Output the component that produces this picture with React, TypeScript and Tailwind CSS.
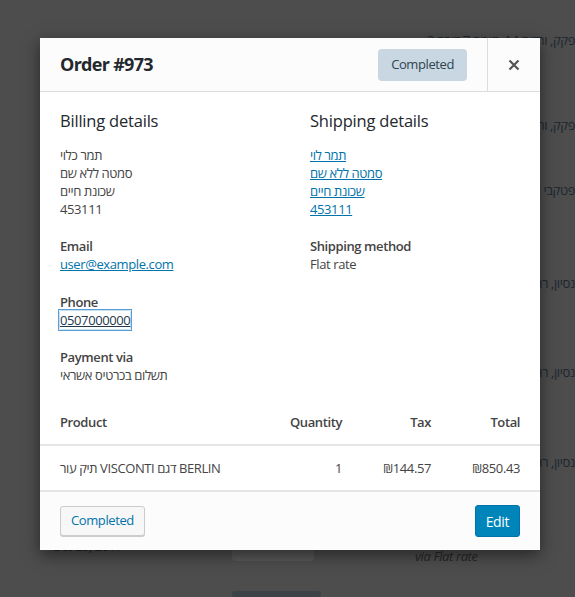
import React from "react";

const fontStack = "font-['Open_Sans','DejaVu_Sans',sans-serif]";

function BackgroundPage() {
  // The orders list beneath the dimmed overlay; only its edges stay visible.
  const rightLines = [
    { text: "פקק, ורדיה 14, קומה 7 דירה 2", mt: "mt-[31px]" },
    { text: "פקק, ורדיה 14, קומה 7 דירה 2", mt: "mt-[67px]" },
    { text: "פטקבי 12, תל אביב", mt: "mt-[47px]" },
    { text: "נסיון, רחוב הבדיקה 3", mt: "mt-[75px]" },
    { text: "נסיון, רחוב הבדיקה 3", mt: "mt-[71px]" },
    { text: "נסיון, רחוב הבדיקה 3", mt: "mt-[72px]" },
  ];
  return (
    <div className="flex h-full flex-col text-[13px] leading-[18px] tracking-[-0.4px] text-[#1c2730]">
      {rightLines.map((l, i) => (
        <div key={i} dir="rtl" className={`${l.mt} whitespace-nowrap text-right`}>
          {l.text}
        </div>
      ))}
      <div className="mt-[57px] flex items-start">
        <div className="ml-[52px] mt-[9px] w-[180px] text-[#1c2730]">Oct 25, 2017</div>
        <div className="flex h-[33px] w-[82px] items-center justify-center rounded-[4px] bg-[#585858] text-[#3a3a3a]">
          Cancelled
        </div>
        <div className="ml-[101px] mt-[19px] italic text-[#262626]">via Flat rate</div>
      </div>
      <div className="ml-[232px] mt-[26px] h-[30px] w-[89px] rounded-[4px] bg-[#3d4246]" />
    </div>
  );
}

function Label({ children }: { children: React.ReactNode }) {
  return <div className="text-[13px] font-semibold leading-[18px] text-[#444]">{children}</div>;
}

function Modal() {
  return (
    <div className="absolute left-[40px] top-[38px] flex w-[500px] flex-col bg-white tracking-[-0.4px] shadow-[0_5px_15px_rgba(0,0,0,0.5)]">
      {/* header */}
      <div className="flex h-[54px] items-stretch border-b border-[#ddd] bg-[#fcfcfc]">
        <h1 className="flex flex-1 items-center pl-5 text-[18px] font-bold tracking-[-0.7px] text-[#23282d]">
          Order #973
        </h1>
        <div className="flex items-center pr-5">
          <span className="flex h-[32px] items-center rounded-[4px] bg-[#c8d7e1] px-[13px] text-[13px] text-[#2e4453]">
            Completed
          </span>
        </div>
        <button className="flex w-[53px] items-center justify-center border-l border-[#ddd]">
          <svg width="12" height="12" viewBox="0 0 12 12" className="text-[#555]">
            <path d="M1.5 1.5 L10.5 10.5 M10.5 1.5 L1.5 10.5" stroke="currentColor" strokeWidth="2.2" />
          </svg>
        </button>
      </div>

      {/* details */}
      <div className="grid grid-cols-[250px_1fr] px-5 pt-[17px] text-[13px] leading-[18px] text-[#444]">
        <div className="flex flex-col">
          <h2 className="text-[16.5px] font-medium leading-[24px] tracking-[-0.2px] text-[#23282d]">Billing details</h2>
          <div className="mt-[13px]">
            <div>תמר כלוי</div>
            <div>סמטה ללא שם</div>
            <div>שכונת חיים</div>
            <div>453111</div>
          </div>
          <div className="mt-[19px]">
            <Label>Email</Label>
            <a href="#" className="text-[#0073aa] underline">user@example.com</a>
          </div>
          <div className="mt-5">
            <Label>Phone</Label>
            <a
              href="#"
              className="text-[#23384a] underline outline outline-1 outline-offset-[1px] outline-[#5b9dd9] shadow-[0_0_2px_rgba(30,140,190,0.8)]"
            >
              0507000000
            </a>
          </div>
          <div className="mt-[19px]">
            <Label>Payment via</Label>
            <div>תשלום בכרטיס אשראי</div>
          </div>
        </div>
        <div className="flex flex-col">
          <h2 className="text-[16.5px] font-medium leading-[24px] tracking-[-0.2px] text-[#23282d]">Shipping details</h2>
          <a href="#" className="mt-[13px] text-[#0073aa] underline">
            <div>תמר לוי</div>
            <div>סמטה ללא שם</div>
            <div>שכונת חיים</div>
            <div>453111</div>
          </a>
          <div className="mt-[19px]">
            <Label>Shipping method</Label>
            <div>Flat rate</div>
          </div>
        </div>
      </div>

      {/* items */}
      <table className="mt-4 w-full border-collapse text-[13px] leading-5 text-[#444]">
        <thead>
          <tr className="border-b-2 border-[#e5e5e5]">
            <th className="py-3 pl-5 text-left font-semibold">Product</th>
            <th className="w-[100px] py-3 text-right font-semibold">Quantity</th>
            <th className="w-[89px] py-3 text-right font-semibold">Tax</th>
            <th className="w-[109px] py-3 pr-5 text-right font-semibold">Total</th>
          </tr>
        </thead>
        <tbody>
          <tr>
            <td className="whitespace-nowrap py-3 pl-5">תיק עור VISCONTI דגם BERLIN</td>
            <td className="py-3 text-right">1</td>
            <td className="py-3 text-right">₪144.57</td>
            <td className="py-3 pr-5 text-right">₪850.43</td>
          </tr>
        </tbody>
      </table>

      {/* footer */}
      <div className="flex items-center justify-between border-t-2 border-[#e5e5e5] bg-[#fcfcfc] px-5 py-[13px]">
        <button className="flex h-[30px] items-center rounded-[3px] border border-[#ccc] bg-[#f7f7f7] px-[10px] text-[13px] text-[#0073aa] shadow-[0_1px_0_#ccc]">
          Completed
        </button>
        <button className="flex h-[32px] items-center rounded-[3px] border border-[#0073aa] bg-[#0085ba] px-[10px] text-[14px] text-white">
          Edit
        </button>
      </div>
    </div>
  );
}

export default function App() {
  return (
    <div className={`relative h-[597px] w-[575px] overflow-hidden bg-[#4d4d4d] ${fontStack}`}>
      <BackgroundPage />
      <Modal />
    </div>
  );
}
